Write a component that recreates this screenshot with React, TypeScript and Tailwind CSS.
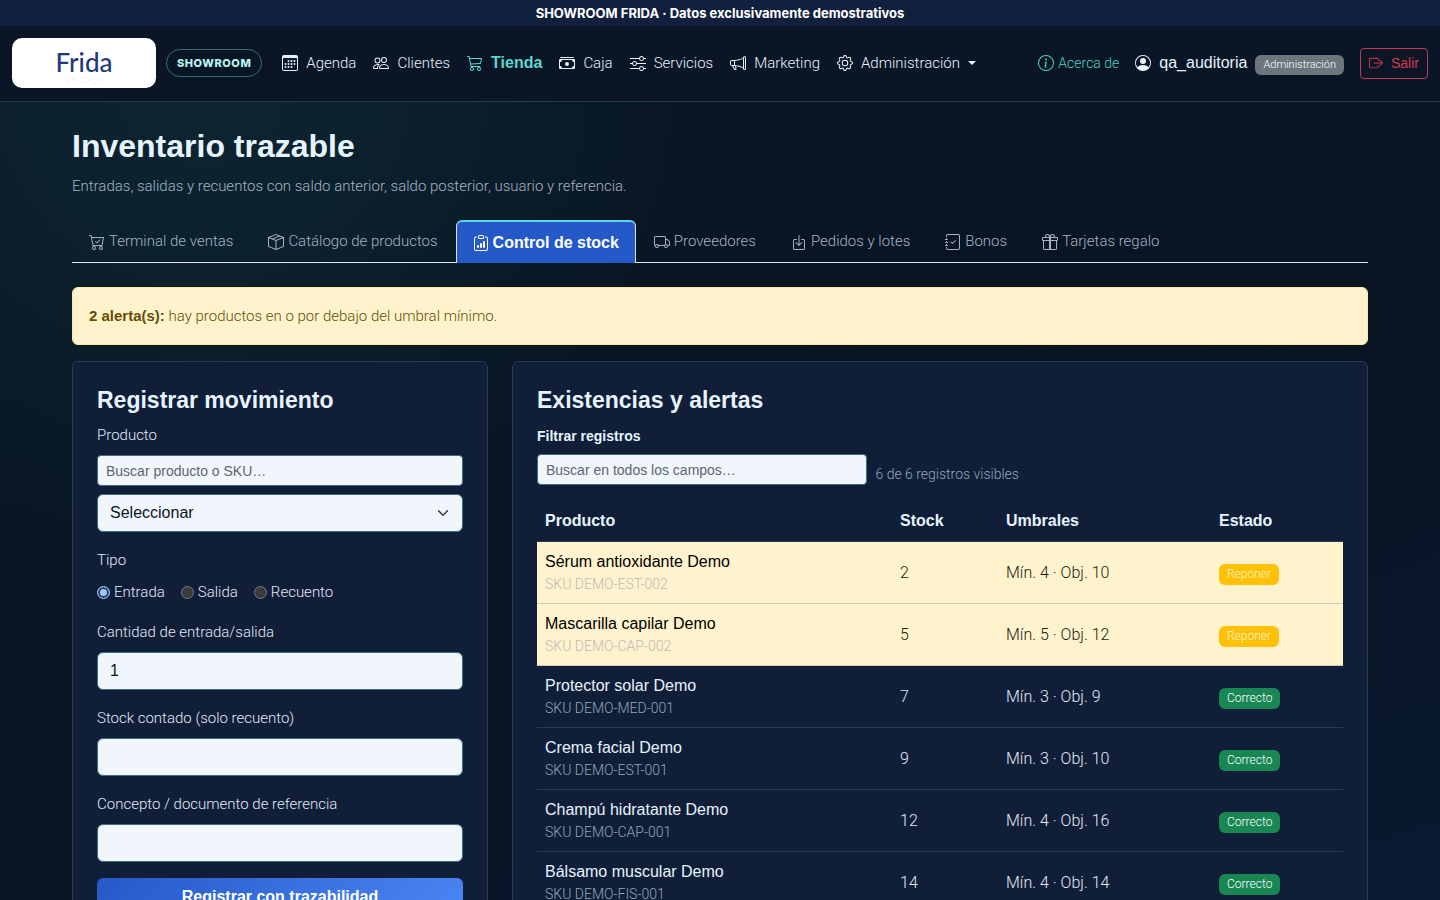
import { useState } from 'react';
import type { IconType } from 'react-icons';
import {
  BsBoxArrowInDown,
  BsBoxArrowRight,
  BsBoxSeam,
  BsCalendar3,
  BsCart3,
  BsCartCheck,
  BsCashStack,
  BsClipboardData,
  BsGear,
  BsGift,
  BsInfoCircle,
  BsJournalCheck,
  BsMegaphone,
  BsPeople,
  BsPersonCircle,
  BsSliders,
  BsTruck,
} from 'react-icons/bs';

interface NavItem {
  label: string;
  icon: IconType;
  active?: boolean;
  dropdown?: boolean;
}

interface Product {
  name: string;
  sku: string;
  stock: number;
  min: number;
  target: number;
}

const NAV: NavItem[] = [
  { label: 'Agenda', icon: BsCalendar3 },
  { label: 'Clientes', icon: BsPeople },
  { label: 'Tienda', icon: BsCart3, active: true },
  { label: 'Caja', icon: BsCashStack },
  { label: 'Servicios', icon: BsSliders },
  { label: 'Marketing', icon: BsMegaphone },
  { label: 'Administración', icon: BsGear, dropdown: true },
];

const TABS: NavItem[] = [
  { label: 'Terminal de ventas', icon: BsCartCheck },
  { label: 'Catálogo de productos', icon: BsBoxSeam },
  { label: 'Control de stock', icon: BsClipboardData, active: true },
  { label: 'Proveedores', icon: BsTruck },
  { label: 'Pedidos y lotes', icon: BsBoxArrowInDown },
  { label: 'Bonos', icon: BsJournalCheck },
  { label: 'Tarjetas regalo', icon: BsGift },
];

const PRODUCTS: Product[] = [
  { name: 'Sérum antioxidante Demo', sku: 'DEMO-EST-002', stock: 2, min: 4, target: 10 },
  { name: 'Mascarilla capilar Demo', sku: 'DEMO-CAP-002', stock: 5, min: 5, target: 12 },
  { name: 'Protector solar Demo', sku: 'DEMO-MED-001', stock: 7, min: 3, target: 9 },
  { name: 'Crema facial Demo', sku: 'DEMO-EST-001', stock: 9, min: 3, target: 10 },
  { name: 'Champú hidratante Demo', sku: 'DEMO-CAP-001', stock: 12, min: 4, target: 16 },
  { name: 'Bálsamo muscular Demo', sku: 'DEMO-FIS-001', stock: 14, min: 4, target: 14 },
];

const MOVEMENTS = ['Entrada', 'Salida', 'Recuento'];

const sans = "font-['Liberation_Sans',Arial,sans-serif]";
const field = `block w-full border border-[#3f6f7c] bg-[#f0f6fc] text-base text-[#0b1626] ${sans}`;
const fieldSm = `block h-[31px] w-full rounded border border-[#3f6f7c] bg-[#f0f6fc] px-2 text-sm text-[#0b1626] placeholder:text-[#5d666f] ${sans}`;

function Navbar() {
  return (
    <nav className="flex items-center border-b border-[#1d3b48] bg-[#0a1626] px-3 pt-3 pb-[13px]">
      <a href="#" className="flex h-[50px] w-36 flex-col items-center justify-end rounded-[10px] bg-white pb-0.5">
        <span className="font-['Lato',sans-serif] text-[26px] leading-7 font-medium text-[#1e3a7b]">Frida</span>
        <span className="font-['Lato',sans-serif] text-[9px] leading-[10px] text-[#eceef1]">STUDIOS</span>
      </a>
      <span className="ml-[10px] flex h-7 items-center rounded-full border border-[#2d6f74] px-[10px] font-['Inter',sans-serif] text-[11px] font-extrabold tracking-wider text-[#b5f5ee]">
        SHOWROOM
      </span>
      <ul className="ml-3 flex items-center gap-px">
        {NAV.map(({ label, icon: Icon, active, dropdown }) => (
          <li key={label}>
            <a
              href="#"
              className={`flex items-center gap-2 px-2 py-2 leading-6 ${
                active ? `text-base font-bold text-[#5cd6d0] ${sans}` : 'text-[#e6f1fb]'
              }`}
            >
              <Icon size={16} />
              {label}
              {dropdown && (
                <span className="border-x-4 border-t-4 border-x-transparent border-t-current" />
              )}
            </a>
          </li>
        ))}
      </ul>
      <div className="ml-auto flex items-center">
        <a href="#" className="flex items-center gap-1 text-sm text-[#4ecdc4]">
          <BsInfoCircle size={16} />
          Acerca de
        </a>
        <span className={`ml-4 flex items-center gap-2 text-base text-[#e6f4ff] ${sans}`}>
          <BsPersonCircle size={16} />
          qa_auditoria
        </span>
        <span className="mt-1 ml-2 rounded-md bg-[#6c757d] px-2 py-1 text-[11px] leading-3 text-white">
          Administración
        </span>
        <button
          type="button"
          className={`ml-4 flex h-[31px] items-center gap-2 rounded border border-[#c03a5a] px-2 text-sm text-[#d9364f] ${sans}`}
        >
          <BsBoxArrowRight size={14} />
          Salir
        </button>
      </div>
    </nav>
  );
}

function Tabs() {
  return (
    <ul className="mb-6 flex gap-px border-b border-[#dee2f0]">
      {TABS.map(({ label, icon: Icon, active }) => (
        <li key={label} className="-mb-px">
          <a
            href="#"
            className={`flex items-center gap-1 px-4 py-2 leading-[25px] ${
              active
                ? `rounded-t-md border border-t-2 border-b-0 border-[#dee2f0] border-t-[#5cd6e8] bg-[#2559c7] text-base font-bold text-white ${sans}`
                : 'border border-b-0 border-transparent text-[#a3b4c6]'
            }`}
          >
            <Icon size={16} />
            {label}
          </a>
        </li>
      ))}
    </ul>
  );
}

function MovementForm() {
  const [movement, setMovement] = useState('Entrada');
  const [quantity, setQuantity] = useState('1');

  return (
    <form
      className="col-span-4 rounded-md border border-[#2a3a55] bg-[#101e38] p-6"
      onSubmit={(e) => e.preventDefault()}
    >
      <h2 className={`mb-2 text-[23px] leading-[29px] font-bold text-[#e6f4ff] ${sans}`}>Registrar movimiento</h2>

      <label htmlFor="product" className="mb-2 block leading-6">Producto</label>
      <input
        type="search"
        aria-label="Buscar producto"
        placeholder="Buscar producto o SKU…"
        className={`mb-2 ${fieldSm}`}
      />
      <div className="relative mb-4">
        <select id="product" className={`h-[38px] appearance-none rounded-md px-3 ${field}`}>
          <option>Seleccionar</option>
          {PRODUCTS.map((p) => (
            <option key={p.sku}>{p.name}</option>
          ))}
        </select>
        <svg
          viewBox="0 0 16 16"
          className="pointer-events-none absolute top-[13px] right-[14px] size-3 fill-none stroke-[#343a40] stroke-2"
        >
          <path strokeLinecap="round" strokeLinejoin="round" d="m2 5 6 6 6-6" />
        </svg>
      </div>

      <fieldset className="mb-4">
        <legend className="mb-2 leading-6">Tipo</legend>
        <div className="flex gap-4">
          {MOVEMENTS.map((m) => (
            <label key={m} className="flex items-center gap-1 leading-6">
              <input
                type="radio"
                name="movement"
                checked={movement === m}
                onChange={() => setMovement(m)}
                className="size-[13px] appearance-none rounded-full border border-[#76797d] bg-[#3b3b3b] checked:border-[#99c8ff] checked:bg-[#99c8ff] checked:inset-ring-2 checked:inset-ring-[#2c3f5c]"
              />
              {m}
            </label>
          ))}
        </div>
      </fieldset>

      <label htmlFor="quantity" className="mb-2 block leading-6">Cantidad de entrada/salida</label>
      <input
        id="quantity"
        value={quantity}
        onChange={(e) => setQuantity(e.target.value)}
        className={`mb-4 h-[38px] rounded-md px-3 ${field}`}
      />
      <label htmlFor="counted" className="mb-2 block leading-6">Stock contado (solo recuento)</label>
      <input id="counted" className={`mb-4 h-[38px] rounded-md px-3 ${field}`} />
      <label htmlFor="concept" className="mb-2 block leading-6">Concepto / documento de referencia</label>
      <input id="concept" className={`mb-4 h-[38px] rounded-md px-3 ${field}`} />

      <button
        type="submit"
        className={`h-[38px] w-full rounded-md bg-linear-135 from-[#2559c7] to-[#4b86f5] text-base font-bold text-white ${sans}`}
      >
        Registrar con trazabilidad
      </button>
    </form>
  );
}

function StockTable() {
  const [query, setQuery] = useState('');
  const rows = PRODUCTS.filter((p) => `${p.name} ${p.sku}`.toLowerCase().includes(query.toLowerCase()));

  return (
    <section className="col-span-8 rounded-md border border-[#2a3a55] bg-[#101e38] p-6">
      <h2 className={`mb-2 text-[23px] leading-[29px] font-bold text-[#e6f4ff] ${sans}`}>Existencias y alertas</h2>

      <label htmlFor="filter" className={`block pt-[3px] pb-[7px] text-sm leading-[21px] font-bold text-[#e6f4ff] ${sans}`}>
        Filtrar registros
      </label>
      <div className="mb-4 flex items-end gap-2">
        <div className="w-[41%]">
          <input
            id="filter"
            type="search"
            value={query}
            onChange={(e) => setQuery(e.target.value)}
            placeholder="Buscar en todos los campos…"
            className={fieldSm}
          />
        </div>
        <span className="text-sm leading-[21px] text-[#94a6bb]">
          {rows.length} de {PRODUCTS.length} registros visibles
        </span>
      </div>

      <table className="w-full table-fixed text-left text-base leading-6">
        <thead>
          <tr className={`border-b border-[#2a3a55] text-[#e6f4ff] ${sans}`}>
            <th className="p-2">Producto</th>
            <th className="w-[106px] p-2">Stock</th>
            <th className="w-[213px] p-2">Umbrales</th>
            <th className="w-[132px] p-2">Estado</th>
          </tr>
        </thead>
        <tbody>
          {rows.map((p) => {
            const low = p.stock <= p.min;
            return (
              <tr
                key={p.sku}
                className={`border-b ${low ? 'border-[#d6cfb6] bg-[#fff3cd] text-[#1c1a12]' : 'border-[#2a3a55]'}`}
              >
                <td className="p-2">
                  <div className={`${sans} ${low ? 'text-black' : 'text-[#e6f4ff]'}`}>{p.name}</div>
                  <div className={`text-sm leading-[21px] ${low ? 'text-[#b9bcb8]' : 'text-[#94a6bb]'}`}>SKU {p.sku}</div>
                </td>
                <td className="p-2">{p.stock}</td>
                <td className="p-2">Mín. {p.min} · Obj. {p.target}</td>
                <td className="p-2">
                  <span
                    className={`inline-block rounded-md px-2 py-1 text-xs leading-[13px] ${
                      low ? 'bg-[#ffc107] text-[#fff3cd]' : 'bg-[#198754] text-white'
                    }`}
                  >
                    {low ? 'Reponer' : 'Correcto'}
                  </span>
                </td>
              </tr>
            );
          })}
        </tbody>
      </table>
    </section>
  );
}

export default function App() {
  return (
    <div className="min-h-screen bg-[#081322] bg-[radial-gradient(circle_at_14%_8%,#0d2632_0%,#0d263200_34%),linear-gradient(160deg,#091624_0%,#081423_55%,#0b1a33_100%)] font-['Roboto',sans-serif] text-[15px] font-light text-[#e0ebf7]">
      <div className="bg-[#11203c] text-center font-['Inter',sans-serif] text-[13px] leading-[26px] font-bold text-white">
        SHOWROOM FRIDA · Datos exclusivamente demostrativos
      </div>
      <Navbar />
      <main className="px-[72px] pt-6 pb-12">
        <h1 className={`mb-2 text-[32px] leading-10 font-bold text-[#e6f4ff] ${sans}`}>Inventario trazable</h1>
        <p className="mb-[22px] leading-6 text-[#a3b4c6]">
          Entradas, salidas y recuentos con saldo anterior, saldo posterior, usuario y referencia.
        </p>
        <Tabs />
        <div role="alert" className="mb-4 rounded-md border border-[#ffe69c] bg-[#fff3cd] p-4 leading-6 text-[#664d03]">
          <strong className={`font-bold ${sans}`}>2 alerta(s):</strong> hay productos en o por debajo del umbral mínimo.
        </div>
        <div className="grid grid-cols-12 gap-6">
          <MovementForm />
          <StockTable />
        </div>
      </main>
    </div>
  );
}
